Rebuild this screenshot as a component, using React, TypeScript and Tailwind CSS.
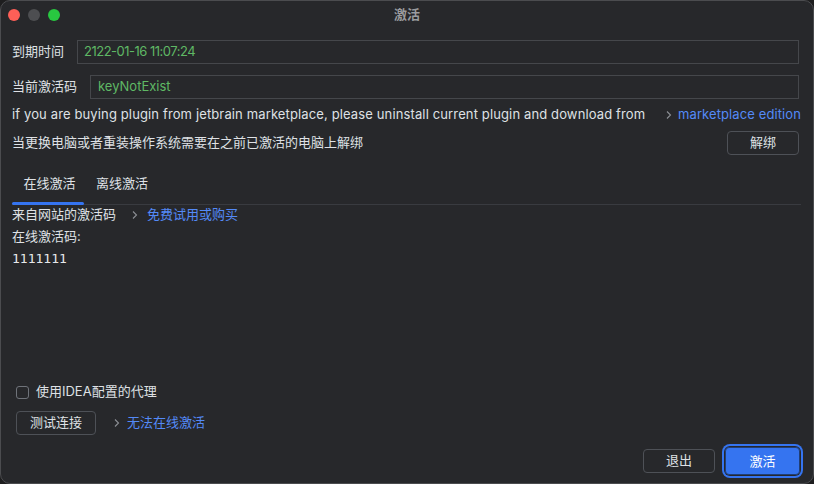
import React from "react";

const font = { fontFamily: 'Inter, "Noto Sans CJK SC", sans-serif' };

function Chevron() {
  return (
    <svg width="8" height="10" viewBox="0 0 8 10" className="shrink-0">
      <path d="M2 1.5 L5.5 5 L2 8.5" fill="none" stroke="#8c8f94" strokeWidth="1.1" />
    </svg>
  );
}

export default function App() {
  return (
    <div className="w-[814px] h-[484px] bg-[#1e1e1f]" style={font}>
      <div className="relative w-[814px] h-[484px] rounded-[10px] border border-[#4b4c4f] bg-[#27282b] text-[13px] text-[#dfe1e5] flex flex-col overflow-hidden">
        {/* title bar */}
        <div className="h-[27px] flex items-center relative shrink-0">
          <div className="flex gap-[8px] pl-[7px]">
            <span className="w-[12px] h-[12px] rounded-full bg-[#fe5f57]" />
            <span className="w-[12px] h-[12px] rounded-full bg-[#4d4e51]" />
            <span className="w-[12px] h-[12px] rounded-full bg-[#28c840]" />
          </div>
          <div className="absolute left-0 right-0 top-[4px] text-center text-[13px] font-bold text-[#9a9b9e]">激活</div>
        </div>

        <div className="flex flex-col pl-[11px] pr-[14px] pt-[12px]">
          <div className="flex items-center h-[24px]">
            <span className="w-[65px] shrink-0">到期时间</span>
            <div className="flex-1 h-[24px] border border-[#45474b] flex items-center px-[6px] text-[#5fb865] tracking-[-0.5px]">2122-01-16 11:07:24</div>
          </div>
          <div className="flex items-center h-[24px] mt-[11px]">
            <span className="w-[78px] shrink-0">当前激活码</span>
            <div className="flex-1 h-[24px] border border-[#45474b] flex items-center px-[7px] text-[#5fb865]">keyNotExist</div>
          </div>
          <div className="flex items-center h-[20px] mt-[6px] -mr-[2px]">
            <span className="whitespace-nowrap tracking-[0.13px]">if you are buying plugin from jetbrain marketplace, please uninstall current plugin and download from</span>
            <span className="ml-auto flex items-center gap-[5px]">
              <Chevron />
              <span className="text-[#548af7] whitespace-nowrap tracking-[0.1px]">marketplace edition</span>
            </span>
          </div>
          <div className="flex items-center mt-[6px]">
            <span>当更换电脑或者重装操作系统需要在之前已激活的电脑上解绑</span>
            <button className="ml-auto w-[72px] h-[24px] rounded-[4px] border border-[#4e5157] text-[13px] text-[#dfe1e5]">解绑</button>
          </div>
        </div>

        {/* tabs */}
        <div className="mt-[16px] ml-[11px] mr-[12px] border-b border-[#393b40] flex h-[34px]">
          <div className="w-[72px] flex flex-col items-center justify-between">
            <span className="pt-[3px] pl-[3px]">在线激活</span>
            <span className="w-[72px] h-[3px] rounded-full bg-[#3574f0] -mb-[1px]" />
          </div>
          <div className="ml-[12px] pt-[3px]">离线激活</div>
        </div>

        <div className="pl-[11px] flex flex-col">
          <div className="flex items-center gap-[8px] h-[20px]">
            <span>来自网站的激活码</span>
            <span className="ml-[7px]"><Chevron /></span>
            <span className="text-[#548af7]">免费试用或购买</span>
          </div>
          <div className="h-[20px] mt-[2px] flex items-center">在线激活码:</div>
          <div className="h-[20px] mt-[2px] flex items-center text-[13px] text-[#e6e7ea]" style={{ fontFamily: '"DejaVu Sans Mono", monospace' }}>1111111</div>
        </div>

        <div className="flex-1" />

        <div className="pl-[15px] flex flex-col">
          <div className="flex items-center gap-[7px] h-[20px]">
            <span className="w-[13px] h-[13px] rounded-[3px] border border-[#6f737a]" />
            <span>使用IDEA配置的代理</span>
          </div>
          <div className="flex items-center mt-[9px]">
            <button className="w-[80px] h-[24px] rounded-[4px] border border-[#4e5157] text-[13px] text-[#dfe1e5]">测试连接</button>
            <span className="ml-[17px]"><Chevron /></span>
            <span className="ml-[6px] text-[#548af7]">无法在线激活</span>
          </div>
        </div>

        <div className="flex justify-end items-center gap-[10px] pr-[13px] mt-[12px] mb-[8px]">
          <button className="w-[72px] h-[24px] rounded-[4px] border border-[#4e5157] text-[13px] text-[#dfe1e5]">退出</button>
          <button className="w-[75px] h-[28px] rounded-[5px] bg-[#3574f0] text-white text-[13px] ring-2 ring-[#3574f0] ring-offset-1 ring-offset-[#27282b] border-0">
            <span className="block w-full h-full rounded-[4px] border border-[#213e75] leading-[26px]">激活</span>
          </button>
        </div>
      </div>
    </div>
  );
}
